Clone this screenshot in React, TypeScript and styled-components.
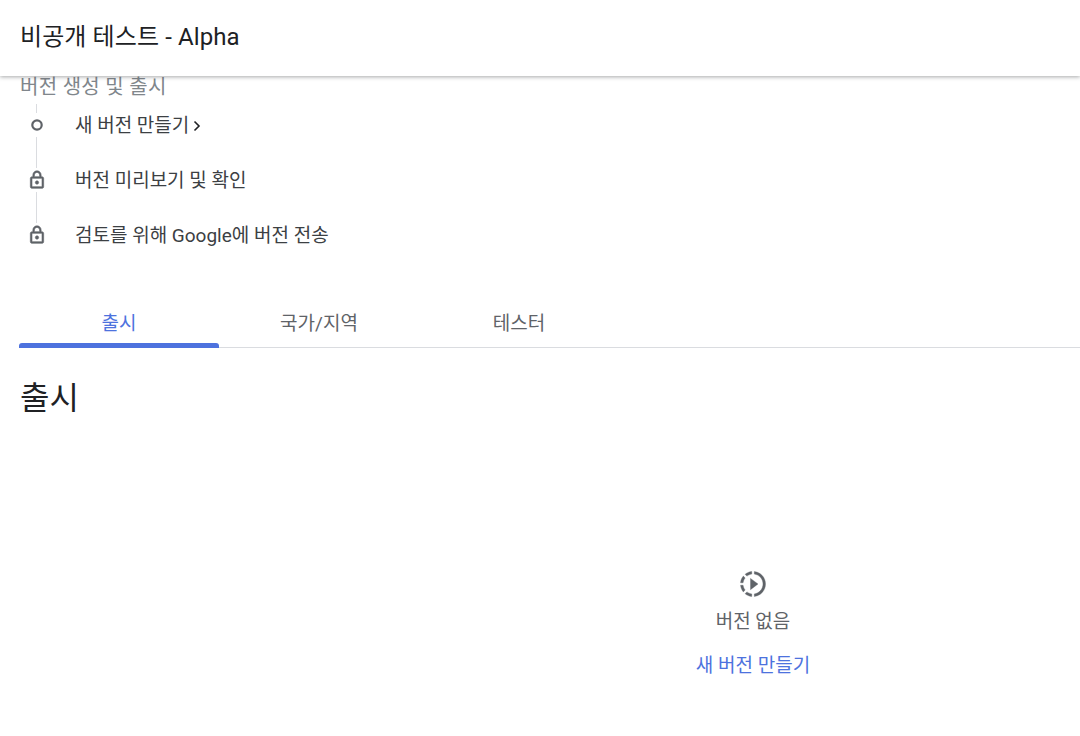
import React from "react";
import styled, { createGlobalStyle } from "styled-components";

const GlobalStyle = createGlobalStyle`
  html, body {
    margin: 0;
    padding: 0;
    background: #fff;
    overflow: hidden;
    font-family: Roboto, "Noto Sans CJK KR", sans-serif;
  }
`;

const steps = [
  { label: "새 버전 만들기", icon: "dot", arrow: true },
  { label: "버전 미리보기 및 확인", icon: "lock", arrow: false },
  { label: "검토를 위해 Google에 버전 전송", icon: "lock", arrow: false },
];

const tabs = ["출시", "국가/지역", "테스터"];

const DotIcon = () => (
  <svg width="18" height="18" viewBox="0 0 18 18">
    <circle cx="9" cy="9" r="4.7" fill="#fff" stroke="#5f6368" strokeWidth="2.2" />
  </svg>
);

const LockIcon = () => (
  <svg width="22" height="22" viewBox="0 0 24 24" fill="#5f6368" stroke="#5f6368" strokeWidth="0.7">
    <path d="M12 17c1.1 0 2-.9 2-2s-.9-2-2-2-2 .9-2 2 .9 2 2 2zm6-9h-1V6c0-2.76-2.24-5-5-5S7 3.24 7 6v2H6c-1.1 0-2 .9-2 2v10c0 1.1.9 2 2 2h12c1.1 0 2-.9 2-2V10c0-1.1-.9-2-2-2zM8.9 6c0-1.71 1.39-3.1 3.1-3.1s3.1 1.39 3.1 3.1v2H8.9V6zM18 20H6V10h12v10z" />
  </svg>
);

const ReleaseIcon = () => (
  <svg width="30" height="30" viewBox="0 0 24 24" fill="#5f6368" stroke="#5f6368" strokeWidth="0.3">
    <path d="M10 7.5v9l6-4.5zM11 4.07V2.05c-2.01.2-3.84 1-5.32 2.21L7.1 5.69c1.11-.86 2.44-1.44 3.9-1.62zM5.69 7.1L4.26 5.68C3.05 7.16 2.25 8.99 2.05 11h2.02c.18-1.46.76-2.79 1.62-3.9zM4.07 13H2.05c.2 2.01 1 3.84 2.21 5.32l1.43-1.43c-.86-1.1-1.44-2.43-1.62-3.89zm1.61 6.74C7.16 20.95 9 21.75 11 21.95v-2.02c-1.46-.18-2.79-.76-3.9-1.62l-1.42 1.43zM22 12c0 5.16-3.92 9.42-8.95 9.95v-2.02C16.97 19.41 20 16.05 20 12s-3.03-7.41-6.95-7.93V2.05C18.08 2.58 22 6.84 22 12z" />
  </svg>
);

const App = () => {
  return (
    <Page>
      <GlobalStyle />
      <Header>비공개 테스트 - Alpha</Header>
      <SectionLabel>버전 생성 및 출시</SectionLabel>
      <Steps>
        {steps.map((s) => (
          <Step key={s.label}>
            <StepIcon>{s.icon === "lock" ? <LockIcon /> : <DotIcon />}</StepIcon>
            <StepText>{s.label}</StepText>
            {s.arrow && (
              <Arrow width="10" height="12" viewBox="0 0 10 12">
                <path d="M2.5 1.5 7 6l-4.5 4.5" fill="none" stroke="#202124" strokeWidth="1.6" />
              </Arrow>
            )}
          </Step>
        ))}
      </Steps>
      <TabBar>
        {tabs.map((t, i) => (
          <Tab key={t} $active={i === 0}>{t}</Tab>
        ))}
      </TabBar>
      <Title>출시</Title>
      <Empty>
        <ReleaseIcon />
        <EmptyText>버전 없음</EmptyText>
        <CreateLink>새 버전 만들기</CreateLink>
      </Empty>
    </Page>
  );
};

export default App;

const Page = styled.div`
  width: 1080px;
  height: 736px;
  overflow: hidden;
  display: flex;
  flex-direction: column;
`;

const Header = styled.div`
  position: relative;
  z-index: 2;
  flex: none;
  height: 76px;
  padding: 0 0 2px 20px;
  box-sizing: border-box;
  display: flex;
  align-items: center;
  background: #fff;
  box-shadow: 0 1px 4px rgba(60, 64, 67, 0.45);
  color: #202124;
  font-size: 24px;
  line-height: 1;
  letter-spacing: 0.1px;
`;

const SectionLabel = styled.div`
  margin: -3px 0 0 20px;
  height: 28px;
  display: flex;
  align-items: center;
  color: #80868b;
  font-size: 20px;
  line-height: 22px;
  letter-spacing: 0.3px;
`;

const Steps = styled.div`
  position: relative;
  margin-left: 27px;
  display: flex;
  flex-direction: column;
  &::before {
    content: "";
    position: absolute;
    left: 9px;
    top: 3px;
    height: 122px;
    width: 1px;
    background: #dadce0;
  }
`;

const Step = styled.div`
  position: relative;
  height: 55px;
  display: flex;
  align-items: center;
  &:first-child {
    height: 48px;
    margin-bottom: 3px;
  }
`;

const StepIcon = styled.div`
  width: 20px;
  height: 24px;
  margin-right: 28px;
  display: flex;
  align-items: center;
  justify-content: center;
  position: relative;
  background: #fff;
`;

const StepText = styled.span`
  margin-top: 2px;
  color: #3c4043;
  font-size: 19px;
  line-height: 24px;
`;

const Arrow = styled.svg`
  margin-left: 3px;
  margin-top: 2px;
`;

const TabBar = styled.div`
  display: flex;
  margin-top: 29px;
  margin-left: 19px;
  height: 57px;
  box-sizing: border-box;
  position: relative;
  &::after {
    content: "";
    position: absolute;
    left: 0;
    width: 1061px;
    bottom: 0;
    height: 1px;
    background: #dadce0;
  }
`;

const Tab = styled.div<{ $active?: boolean }>`
  position: relative;
  width: 200px;
  display: flex;
  align-items: center;
  justify-content: center;
  padding-top: 3px;
  box-sizing: border-box;
  color: ${(p) => (p.$active ? "#4d72de" : "#5f6368")};
  font-size: 19px;
  &::after {
    content: "";
    display: ${(p) => (p.$active ? "block" : "none")};
    position: absolute;
    z-index: 1;
    left: 0;
    right: 0;
    bottom: 0;
    height: 5px;
    border-radius: 3px 3px 0 0;
    background: #4d72de;
  }
`;

const Title = styled.h1`
  margin: 28px 0 0 20px;
  color: #202124;
  font-size: 32px;
  font-weight: 400;
  line-height: 44px;
`;

const Empty = styled.div`
  width: 200px;
  margin-left: 653px;
  margin-top: 149px;
  display: flex;
  flex-direction: column;
  align-items: center;
`;

const EmptyText = styled.div`
  margin-top: 10px;
  color: #5f6368;
  font-size: 19px;
  line-height: 26px;
`;

const CreateLink = styled.a`
  margin-top: 18px;
  color: #4d72de;
  font-size: 19px;
  line-height: 26px;
  cursor: pointer;
`;
